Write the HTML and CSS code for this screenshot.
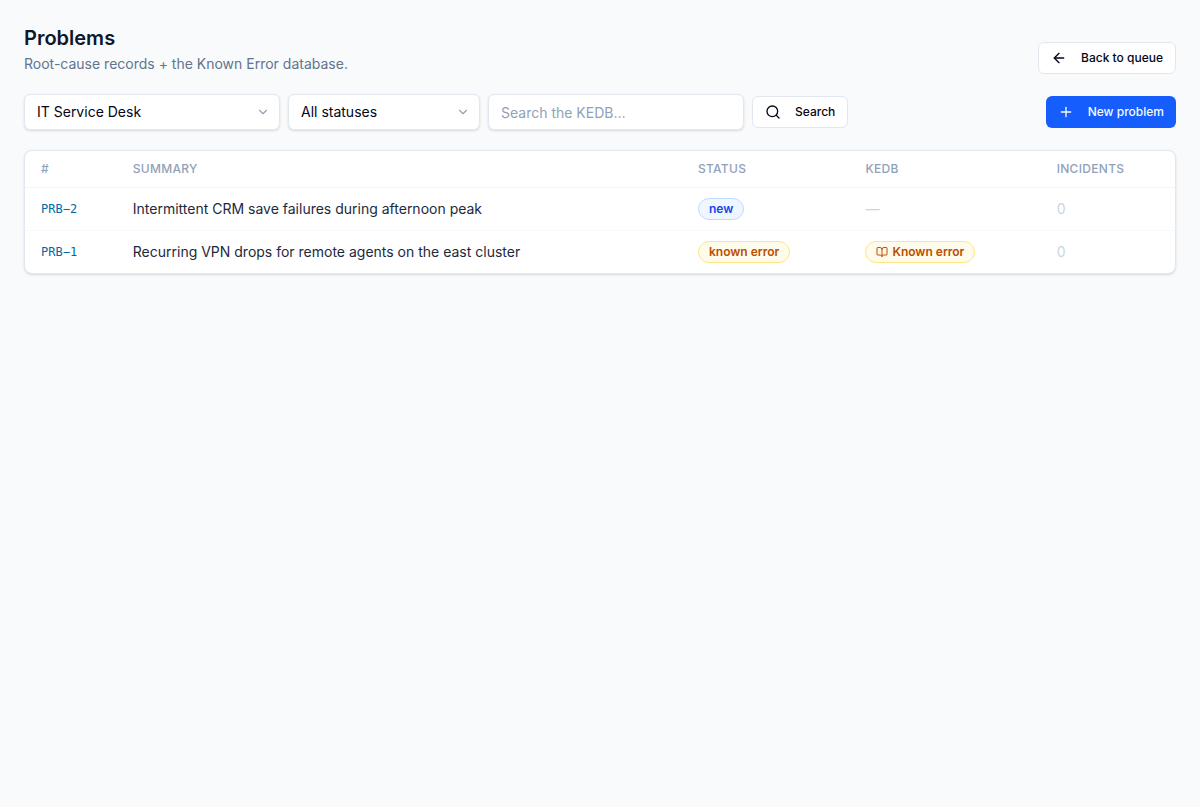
FILE: index.html
```
<!DOCTYPE html>
<html lang="en">
<head>
    <meta charset="UTF-8">
    <meta name="viewport" content="width=device-width, initial-scale=1.0">
    <link rel="stylesheet" href="styles.css">
    <title>Problems</title>
</head>
<body>
    <main class="page">
        <header class="page-header">
            <div>
                <h1>Problems</h1>
                <p class="subtitle">Root-cause records + the Known Error database.</p>
            </div>
            <button type="button" class="btn">
                <svg class="icon" viewBox="0 0 24 24"><path d="m12 19-7-7 7-7"/><path d="M19 12H5"/></svg>
                Back to queue
            </button>
        </header>

        <form class="toolbar">
            <div class="select select-desk">
                <select name="desk" aria-label="Service desk">
                    <option>IT Service Desk</option>
                </select>
                <svg class="icon chevron" viewBox="0 0 24 24"><path d="m6 9 6 6 6-6"/></svg>
            </div>
            <div class="select select-status">
                <select name="status" aria-label="Status">
                    <option>All statuses</option>
                    <option>new</option>
                    <option>known error</option>
                </select>
                <svg class="icon chevron" viewBox="0 0 24 24"><path d="m6 9 6 6 6-6"/></svg>
            </div>
            <input type="text" name="q" class="search" placeholder="Search the KEDB…" aria-label="Search the KEDB">
            <button type="submit" class="btn">
                <svg class="icon" viewBox="0 0 24 24"><circle cx="11" cy="11" r="8"/><path d="m21 21-4.3-4.3"/></svg>
                Search
            </button>
            <button type="button" class="btn btn-primary">
                <svg class="icon" viewBox="0 0 24 24"><path d="M5 12h14"/><path d="M12 5v14"/></svg>
                New problem
            </button>
        </form>

        <div class="card">
            <table>
                <thead>
                    <tr>
                        <th>#</th>
                        <th>Summary</th>
                        <th>Status</th>
                        <th>KEDB</th>
                        <th>Incidents</th>
                    </tr>
                </thead>
                <tbody>
                    <tr>
                        <td class="key">PRB−2</td>
                        <td>Intermittent CRM save failures during afternoon peak</td>
                        <td><span class="pill pill-blue">new</span></td>
                        <td class="empty">—</td>
                        <td class="empty">0</td>
                    </tr>
                    <tr>
                        <td class="key">PRB−1</td>
                        <td>Recurring VPN drops for remote agents on the east cluster</td>
                        <td><span class="pill pill-amber">known error</span></td>
                        <td>
                            <span class="pill pill-amber">
                                <svg class="icon icon-small" viewBox="0 0 24 24"><path d="M12 7v14"/><path d="M3 18a1 1 0 0 1-1-1V4a1 1 0 0 1 1-1h5a4 4 0 0 1 4 4 4 4 0 0 1 4-4h5a1 1 0 0 1 1 1v13a1 1 0 0 1-1 1h-6a3 3 0 0 0-3 3 3 3 0 0 0-3-3z"/></svg>
                                Known error
                            </span>
                        </td>
                        <td class="empty">0</td>
                    </tr>
                </tbody>
            </table>
        </div>
    </main>
</body>
</html>
```
FILE: styles.css
```
* {
    margin: 0;
    padding: 0;
    box-sizing: border-box;
}
body {
    background-color: #f8fafc;
    color: #020618;
    font-family: Inter, sans-serif;
    font-size: 14px;
    line-height: 20px;
}
.page {
    display: flex;
    flex-direction: column;
    gap: 20px;
    padding: 24px;
}
.page-header {
    display: flex;
    align-items: flex-end;
    justify-content: space-between;
}
h1 {
    color: #0f172b;
    font-size: 20px;
    font-weight: 600;
    line-height: 28px;
}
.subtitle {
    margin-top: 2px;
    color: #62748e;
}

/* icons */
.icon {
    flex: none;
    width: 16px;
    height: 16px;
    fill: none;
    stroke: currentColor;
    stroke-width: 2;
    stroke-linecap: round;
    stroke-linejoin: round;
}
.icon-small {
    width: 12px;
    height: 12px;
}

/* buttons */
.btn {
    display: inline-flex;
    align-items: center;
    gap: 14px;
    height: 32px;
    padding: 0 12px;
    border: 1px solid #e2e8f0;
    border-radius: 6px;
    background-color: #fff;
    color: #020618;
    font: 500 12px/16px Inter, sans-serif;
    white-space: nowrap;
}
.btn-primary {
    margin-left: auto;
    border: 0;
    background-color: #155dfc;
    color: #f8fafc;
}

/* filters */
.toolbar {
    display: flex;
    flex-wrap: wrap;
    align-items: center;
    gap: 8px;
}
.select {
    position: relative;
}
.select select,
.search {
    width: 100%;
    height: 36px;
    padding: 0 12px;
    border: 1px solid #e2e8f0;
    border-radius: 6px;
    background-color: #fff;
    box-shadow: 0 1px 3px rgba(0, 0, 0, 0.1), 0 1px 2px -1px rgba(0, 0, 0, 0.1);
    color: #020618;
    font: 14px/20px Inter, sans-serif;
}
.select select {
    display: block;
    appearance: none;
}
.select-desk,
.search {
    width: 256px;
}
.select-status {
    width: 192px;
}
.chevron {
    position: absolute;
    top: 11px;
    right: 10px;
    width: 14px;
    height: 14px;
    color: #90a1b9;
    pointer-events: none;
}
.search::placeholder {
    color: #90a1b9;
}

/* table */
.card {
    overflow: hidden;
    border: 1px solid #e2e8f0;
    border-radius: 8px;
    background-color: #fff;
    box-shadow: 0 1px 3px rgba(0, 0, 0, 0.1), 0 1px 2px -1px rgba(0, 0, 0, 0.1);
}
table {
    width: 100%;
    border-collapse: separate;
    border-spacing: 0;
}
th,
td {
    padding: 10px 16px;
    text-align: left;
}
th {
    border-bottom: 1px solid #f1f5f9;
    color: #90a1b9;
    font-size: 12px;
    font-weight: 500;
    line-height: 16px;
    letter-spacing: 0.025em;
    text-transform: uppercase;
}
td {
    border-bottom: 1px solid #f8fafc;
    color: #1d293d;
}
tbody tr:last-child td {
    border-bottom: 0;
}
td.key {
    color: #0069a8;
    font-family: "DejaVu Sans Mono", monospace;
    font-size: 12px;
}
td.empty {
    color: #cad5e2;
}
.pill {
    display: inline-flex;
    align-items: center;
    gap: 4px;
    padding: 2px 10px;
    border: 1px solid;
    border-radius: 11px;
    font-size: 12px;
    font-weight: 600;
    line-height: 16px;
    vertical-align: middle;
    white-space: nowrap;
}
.pill-blue {
    border-color: #bedbff;
    background-color: #eff6ff;
    color: #1447e6;
}
.pill-amber {
    border-color: #fee685;
    background-color: #fffbeb;
    color: #bb4d00;
}
```
